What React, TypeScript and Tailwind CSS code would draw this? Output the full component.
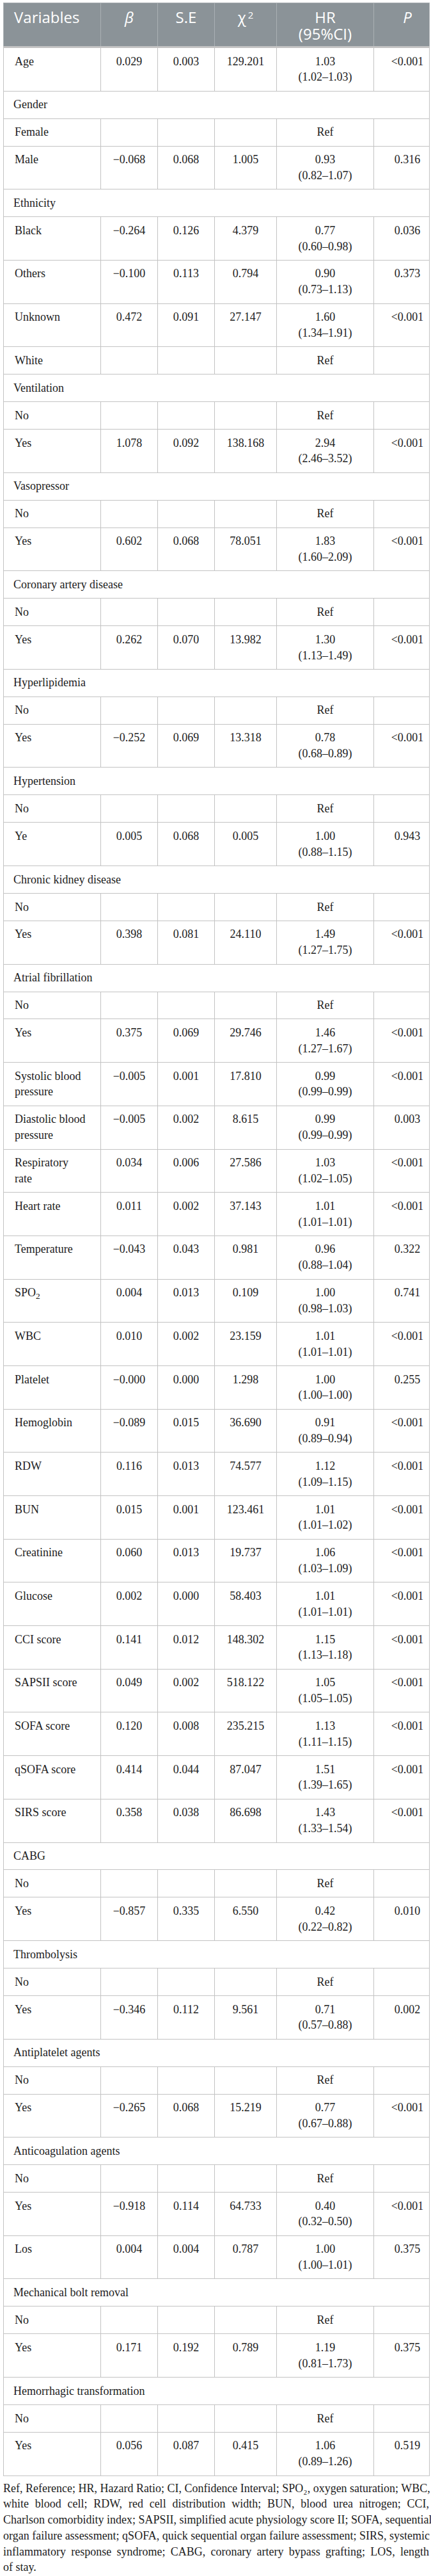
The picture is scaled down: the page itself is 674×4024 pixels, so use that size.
import type { ReactNode } from 'react';

type DataRow = {
  label: ReactNode;
  b?: string;
  se?: string;
  chi?: string;
  hr?: string;
  ci?: string;
  p?: string;
  ref?: boolean;
};
type Row = { sec: string } | DataRow;

const rows: Row[] = [
  { label: 'Age', b: '0.029', se: '0.003', chi: '129.201', hr: '1.03', ci: '(1.02–1.03)', p: '<0.001' },
  { sec: 'Gender' },
  { label: 'Female', ref: true },
  { label: 'Male', b: '−0.068', se: '0.068', chi: '1.005', hr: '0.93', ci: '(0.82–1.07)', p: '0.316' },
  { sec: 'Ethnicity' },
  { label: 'Black', b: '−0.264', se: '0.126', chi: '4.379', hr: '0.77', ci: '(0.60–0.98)', p: '0.036' },
  { label: 'Others', b: '−0.100', se: '0.113', chi: '0.794', hr: '0.90', ci: '(0.73–1.13)', p: '0.373' },
  { label: 'Unknown', b: '0.472', se: '0.091', chi: '27.147', hr: '1.60', ci: '(1.34–1.91)', p: '<0.001' },
  { label: 'White', ref: true },
  { sec: 'Ventilation' },
  { label: 'No', ref: true },
  { label: 'Yes', b: '1.078', se: '0.092', chi: '138.168', hr: '2.94', ci: '(2.46–3.52)', p: '<0.001' },
  { sec: 'Vasopressor' },
  { label: 'No', ref: true },
  { label: 'Yes', b: '0.602', se: '0.068', chi: '78.051', hr: '1.83', ci: '(1.60–2.09)', p: '<0.001' },
  { sec: 'Coronary artery disease' },
  { label: 'No', ref: true },
  { label: 'Yes', b: '0.262', se: '0.070', chi: '13.982', hr: '1.30', ci: '(1.13–1.49)', p: '<0.001' },
  { sec: 'Hyperlipidemia' },
  { label: 'No', ref: true },
  { label: 'Yes', b: '−0.252', se: '0.069', chi: '13.318', hr: '0.78', ci: '(0.68–0.89)', p: '<0.001' },
  { sec: 'Hypertension' },
  { label: 'No', ref: true },
  { label: 'Ye', b: '0.005', se: '0.068', chi: '0.005', hr: '1.00', ci: '(0.88–1.15)', p: '0.943' },
  { sec: 'Chronic kidney disease' },
  { label: 'No', ref: true },
  { label: 'Yes', b: '0.398', se: '0.081', chi: '24.110', hr: '1.49', ci: '(1.27–1.75)', p: '<0.001' },
  { sec: 'Atrial fibrillation' },
  { label: 'No', ref: true },
  { label: 'Yes', b: '0.375', se: '0.069', chi: '29.746', hr: '1.46', ci: '(1.27–1.67)', p: '<0.001' },
  { label: 'Systolic blood\npressure', b: '−0.005', se: '0.001', chi: '17.810', hr: '0.99', ci: '(0.99–0.99)', p: '<0.001' },
  { label: 'Diastolic blood\npressure', b: '−0.005', se: '0.002', chi: '8.615', hr: '0.99', ci: '(0.99–0.99)', p: '0.003' },
  { label: 'Respiratory\nrate', b: '0.034', se: '0.006', chi: '27.586', hr: '1.03', ci: '(1.02–1.05)', p: '<0.001' },
  { label: 'Heart rate', b: '0.011', se: '0.002', chi: '37.143', hr: '1.01', ci: '(1.01–1.01)', p: '<0.001' },
  { label: 'Temperature', b: '−0.043', se: '0.043', chi: '0.981', hr: '0.96', ci: '(0.88–1.04)', p: '0.322' },
  {
    label: (
      <>
        SPO<sub>2</sub>
      </>
    ),
    b: '0.004', se: '0.013', chi: '0.109', hr: '1.00', ci: '(0.98–1.03)', p: '0.741',
  },
  { label: 'WBC', b: '0.010', se: '0.002', chi: '23.159', hr: '1.01', ci: '(1.01–1.01)', p: '<0.001' },
  { label: 'Platelet', b: '−0.000', se: '0.000', chi: '1.298', hr: '1.00', ci: '(1.00–1.00)', p: '0.255' },
  { label: 'Hemoglobin', b: '−0.089', se: '0.015', chi: '36.690', hr: '0.91', ci: '(0.89–0.94)', p: '<0.001' },
  { label: 'RDW', b: '0.116', se: '0.013', chi: '74.577', hr: '1.12', ci: '(1.09–1.15)', p: '<0.001' },
  { label: 'BUN', b: '0.015', se: '0.001', chi: '123.461', hr: '1.01', ci: '(1.01–1.02)', p: '<0.001' },
  { label: 'Creatinine', b: '0.060', se: '0.013', chi: '19.737', hr: '1.06', ci: '(1.03–1.09)', p: '<0.001' },
  { label: 'Glucose', b: '0.002', se: '0.000', chi: '58.403', hr: '1.01', ci: '(1.01–1.01)', p: '<0.001' },
  { label: 'CCI score', b: '0.141', se: '0.012', chi: '148.302', hr: '1.15', ci: '(1.13–1.18)', p: '<0.001' },
  { label: 'SAPSII score', b: '0.049', se: '0.002', chi: '518.122', hr: '1.05', ci: '(1.05–1.05)', p: '<0.001' },
  { label: 'SOFA score', b: '0.120', se: '0.008', chi: '235.215', hr: '1.13', ci: '(1.11–1.15)', p: '<0.001' },
  { label: 'qSOFA score', b: '0.414', se: '0.044', chi: '87.047', hr: '1.51', ci: '(1.39–1.65)', p: '<0.001' },
  { label: 'SIRS score', b: '0.358', se: '0.038', chi: '86.698', hr: '1.43', ci: '(1.33–1.54)', p: '<0.001' },
  { sec: 'CABG' },
  { label: 'No', ref: true },
  { label: 'Yes', b: '−0.857', se: '0.335', chi: '6.550', hr: '0.42', ci: '(0.22–0.82)', p: '0.010' },
  { sec: 'Thrombolysis' },
  { label: 'No', ref: true },
  { label: 'Yes', b: '−0.346', se: '0.112', chi: '9.561', hr: '0.71', ci: '(0.57–0.88)', p: '0.002' },
  { sec: 'Antiplatelet agents' },
  { label: 'No', ref: true },
  { label: 'Yes', b: '−0.265', se: '0.068', chi: '15.219', hr: '0.77', ci: '(0.67–0.88)', p: '<0.001' },
  { sec: 'Anticoagulation agents' },
  { label: 'No', ref: true },
  { label: 'Yes', b: '−0.918', se: '0.114', chi: '64.733', hr: '0.40', ci: '(0.32–0.50)', p: '<0.001' },
  { label: 'Los', b: '0.004', se: '0.004', chi: '0.787', hr: '1.00', ci: '(1.00–1.01)', p: '0.375' },
  { sec: 'Mechanical bolt removal' },
  { label: 'No', ref: true },
  { label: 'Yes', b: '0.171', se: '0.192', chi: '0.789', hr: '1.19', ci: '(0.81–1.73)', p: '0.375' },
  { sec: 'Hemorrhagic transformation' },
  { label: 'No', ref: true },
  { label: 'Yes', b: '0.056', se: '0.087', chi: '0.415', hr: '1.06', ci: '(0.89–1.26)', p: '0.519' },
];

const td = 'border border-[#c3c3c3] align-top py-[8.6px]';
const num = `${td} text-center px-[6px]`;
const th = 'border border-[#aab0b4] bg-[#8b9398] align-top pt-[9px] pb-[6px] font-normal text-white';

function BodyRow({ row }: { row: Row }) {
  if ('sec' in row) {
    return (
      <tr>
        <td colSpan={6} className={`${td} pl-[15px]`}>
          {row.sec}
        </td>
      </tr>
    );
  }
  return (
    <tr>
      <td className={`${td} pl-[17px] pr-[4px] whitespace-pre-line`}>{row.label}</td>
      <td className={num}>{row.b}</td>
      <td className={num}>{row.se}</td>
      <td className={num}>{row.chi}</td>
      <td className={num}>
        {row.ref ? (
          'Ref'
        ) : (
          <>
            {row.hr}
            <br />
            {row.ci}
          </>
        )}
      </td>
      <td className={`${td} text-center pl-[20px] pr-[2px]`}>{row.p}</td>
    </tr>
  );
}

const footLines = [
  'Ref, Reference; HR, Hazard Ratio; CI, Confidence Interval; SPO₂, oxygen saturation; WBC,',
  'white blood cell; RDW, red cell distribution width; BUN, blood urea nitrogen; CCI,',
  'Charlson comorbidity index; SAPSII, simplified acute physiology score II; SOFA, sequential',
  'organ failure assessment; qSOFA, quick sequential organ failure assessment; SIRS, systemic',
  'inflammatory response syndrome; CABG, coronary artery bypass grafting; LOS, length',
];

export default function App() {
  return (
    <div className="w-[674px] bg-white pt-[4px] pl-[5px] text-[#222] font-['Liberation_Serif',serif] text-[18px] leading-[24.75px]">
      <table className="w-[666px] table-fixed border-collapse">
        <colgroup>
          <col className="w-[152px]" />
          <col className="w-[89px]" />
          <col className="w-[89px]" />
          <col className="w-[97px]" />
          <col className="w-[152px]" />
          <col className="w-[87px]" />
        </colgroup>
        <thead className="font-['Open_Sans',sans-serif] text-[24px] leading-[26px]">
          <tr className="border-b-[3px] border-b-[#c3c3c3]">
            <th className={`${th} text-left pl-[16px]`}>Variables</th>
            <th className={`${th} text-center italic`}>β</th>
            <th className={`${th} text-center`}>S.E</th>
            <th className={`${th} text-center`}>
              χ<sup className="text-[15px] ml-[3px]">2</sup>
            </th>
            <th className={`${th} text-center`}>
              HR
              <br />
              (95%CI)
            </th>
            <th className={`${th} text-center italic pl-[20px] pr-[2px]`}>P</th>
          </tr>
        </thead>
        <tbody>
          {rows.map((row, i) => (
            <BodyRow key={i} row={row} />
          ))}
        </tbody>
      </table>
      <div className="w-[666px] mt-[7px] pb-[7px]">
        {footLines.map((line, i) => (
          <p key={i} className="text-justify [text-align-last:justify] whitespace-nowrap">
            {line}
          </p>
        ))}
        <p>of stay.</p>
      </div>
    </div>
  );
}
